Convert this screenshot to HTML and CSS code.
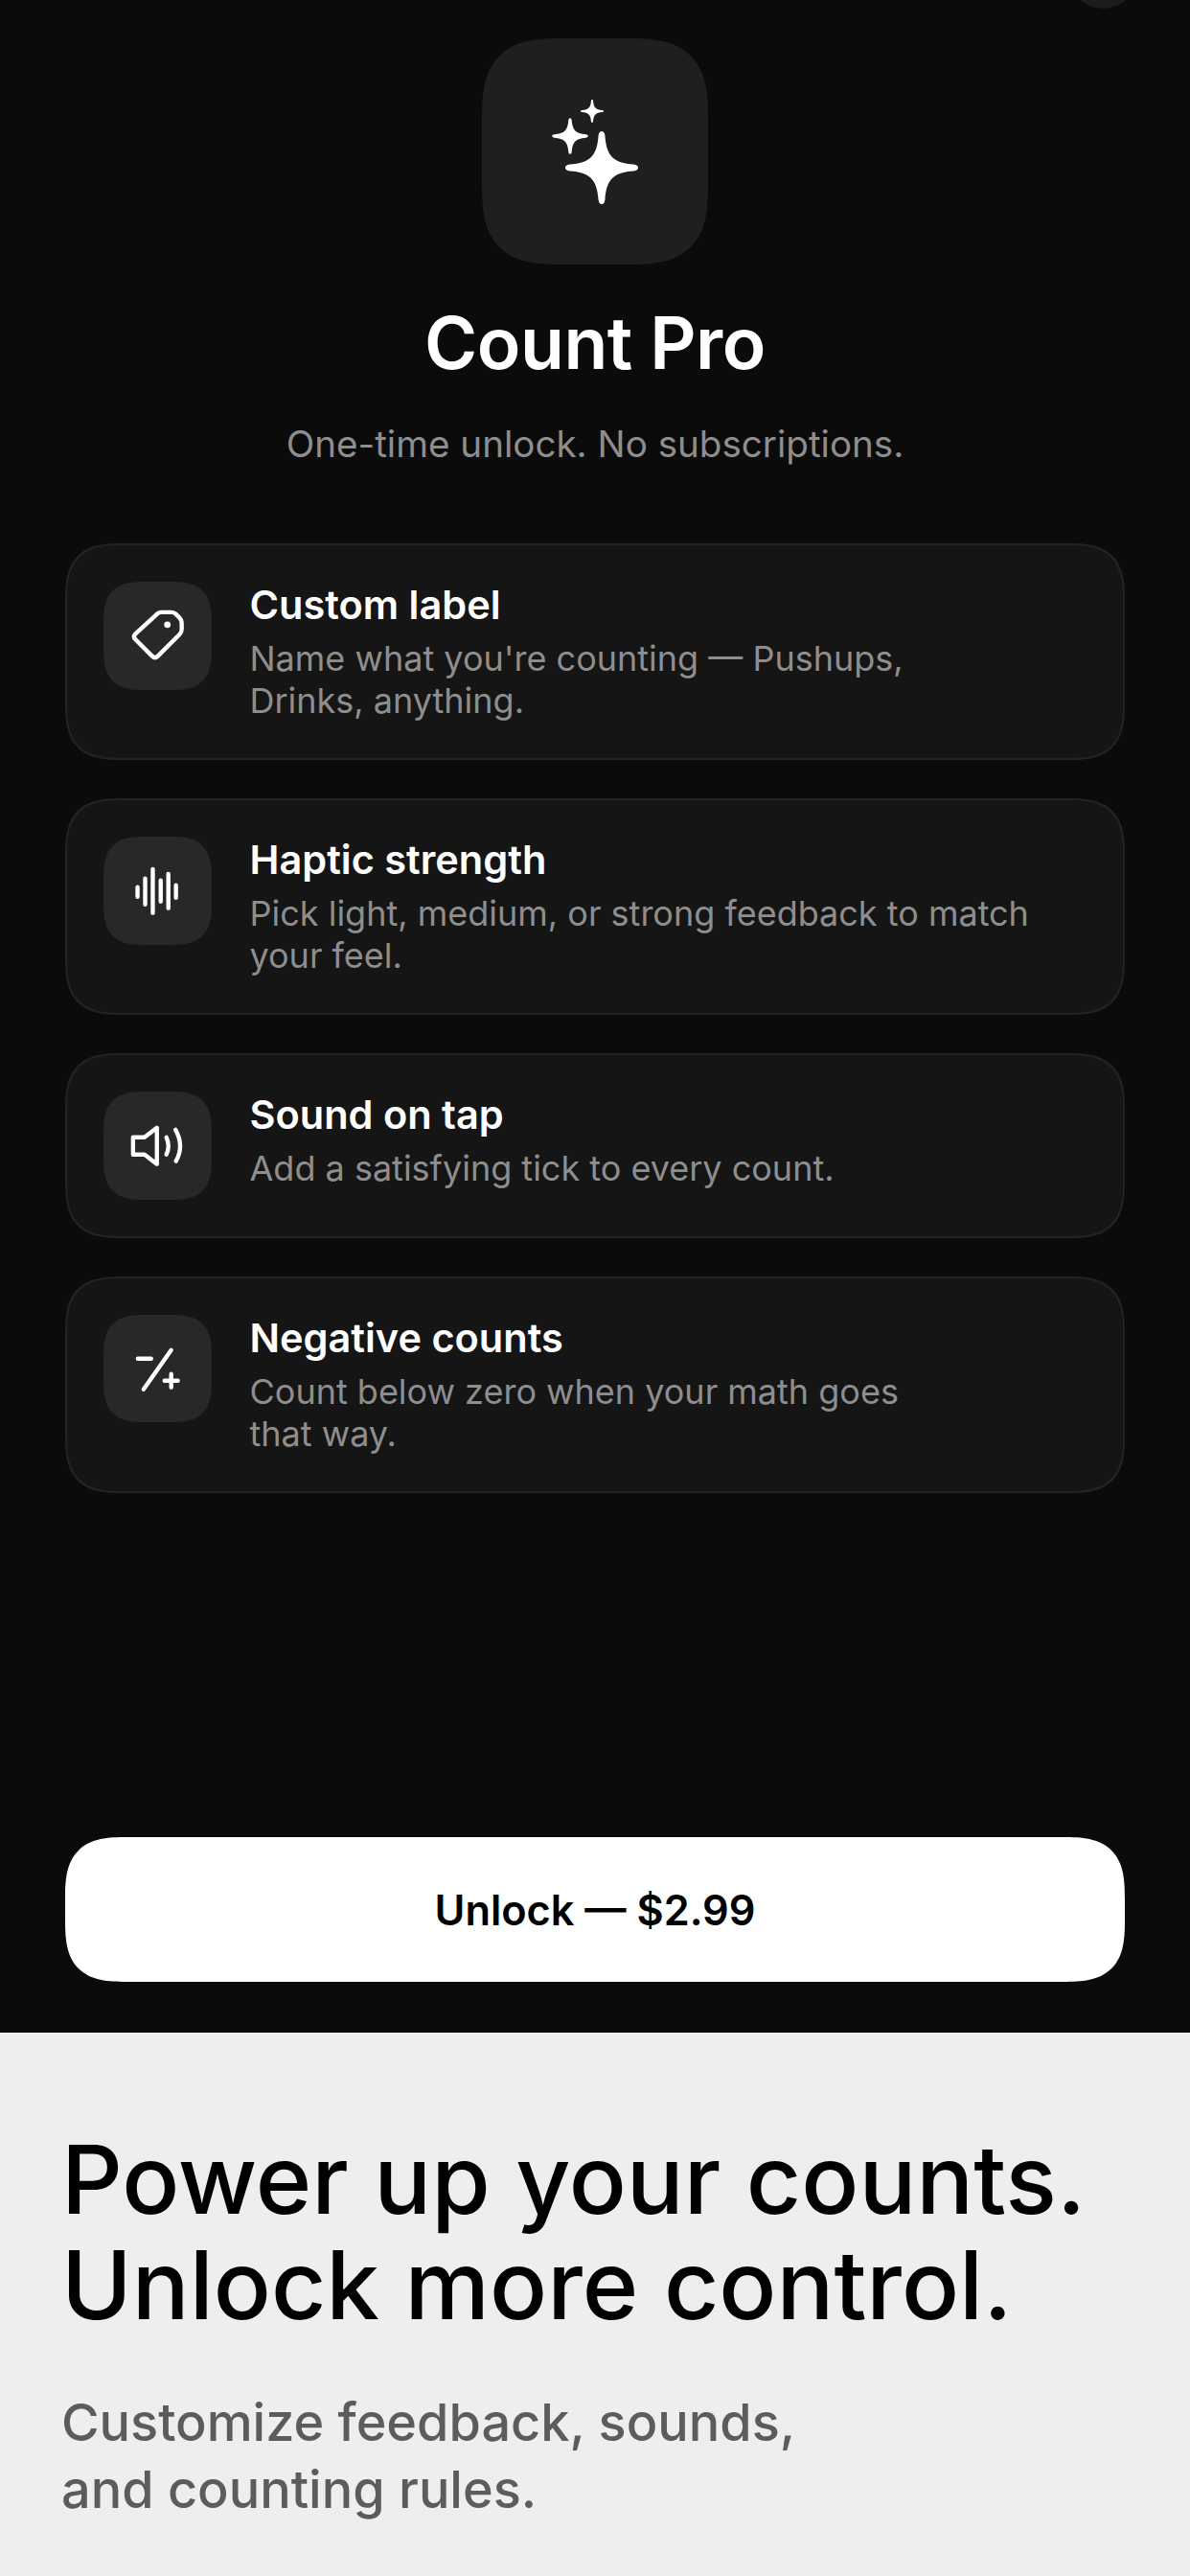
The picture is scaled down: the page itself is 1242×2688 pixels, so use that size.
FILE: index.html
```html
<!DOCTYPE html>
<html lang="en">
<head>
<meta charset="utf-8">
<title>Count Pro</title>
<link rel="stylesheet" href="styles.css">
</head>
<body>
<main class="paywall">
  <span class="close-dot"></span>
  <div class="hero-tile">
    <svg class="hero-icon" viewBox="0 0 236 236">
      <defs>
        <path id="star" d="M0-100C5-100 8-96 9-88C13-32 32-13 88-9C96-8 100-5 100 0C100 5 96 8 88 9C32 13 13 32 9 88C8 96 5 100 0 100C-5 100-8 96-9 88C-13 32-32 13-88 9C-96 8-100 5-100 0C-100-5-96-8-88-9C-32-13-13-32-9-88C-8-96-5-100 0-100Z"/>
      </defs>
      <use href="#star" transform="translate(125 135) scale(.38)"/>
      <use href="#star" transform="translate(92 102) scale(.187)"/>
      <use href="#star" transform="translate(115 76) scale(.12)"/>
    </svg>
  </div>
  <h1 class="title">Count Pro</h1>
  <p class="subtitle">One-time unlock. No subscriptions.</p>
  <section class="features">
    <article class="card">
      <div class="tile">
        <svg class="glyph" viewBox="0 0 113 113">
          <path d="M60.5 32H71Q74 32 76 34L79.5 37.5Q82 40 82 43V50Q82 53 80 55L57 78Q54 81 51 78L33.5 60.5Q30.5 57.5 33.5 54.5L55 35Q57.5 32 60.5 32Z"/>
          <circle class="solid" cx="67" cy="45" r="3.4"/>
        </svg>
      </div>
      <div class="copy">
        <h2 class="card-title">Custom label</h2>
        <p class="card-text">Name what you're counting — Pushups,<br>Drinks, anything.</p>
      </div>
    </article>
    <article class="card">
      <div class="tile">
        <svg class="glyph" viewBox="0 0 113 113">
          <path d="M35.7 53V63M43.7 44V71M51.7 34V80M60 46V68M68 39V75M76 51V64"/>
        </svg>
      </div>
      <div class="copy">
        <h2 class="card-title">Haptic strength</h2>
        <p class="card-text">Pick light, medium, or strong feedback to match<br>your feel.</p>
      </div>
    </article>
    <article class="card">
      <div class="tile">
        <svg class="glyph" viewBox="0 0 113 113">
          <path d="M31 48H43L56 38V76L43 66H31Z"/>
          <path d="M66 48Q70 57 66 66M75.5 40Q85 57 76 73"/>
        </svg>
      </div>
      <div class="copy">
        <h2 class="card-title">Sound on tap</h2>
        <p class="card-text">Add a satisfying tick to every count.</p>
      </div>
    </article>
    <article class="card">
      <div class="tile">
        <svg class="glyph" viewBox="0 0 113 113">
          <path d="M36 46H50M71 37L42 78M71 62V76M64 69H78"/>
        </svg>
      </div>
      <div class="copy">
        <h2 class="card-title">Negative counts</h2>
        <p class="card-text">Count below zero when your math goes<br>that way.</p>
      </div>
    </article>
  </section>
  <button class="unlock">Unlock — $2.99</button>
</main>
<footer class="promo">
  <h2 class="promo-title">Power up your counts.<br>Unlock more control.</h2>
  <p class="promo-text">Customize feedback, sounds,<br>and counting rules.</p>
</footer>
</body>
</html>
```
FILE: styles.css
```css
* { box-sizing: border-box; }
html, body { margin: 0; padding: 0; }
body {
  width: 1242px;
  height: 2688px;
  display: flex;
  flex-direction: column;
  overflow: hidden;
  background: #eeeeee;
  font-family: Inter, "Liberation Sans", sans-serif;
}
.paywall {
  position: relative;
  height: 2121px;
  padding: 40px 68px 53px;
  display: flex;
  flex-direction: column;
  align-items: center;
  background: #0b0b0b;
  color: #fff;
}
.close-dot {
  position: absolute;
  top: -62px;
  left: 1116px;
  width: 71px;
  height: 71px;
  border-radius: 50%;
  background: #1c1c1c;
}
.hero-tile {
  width: 236px;
  height: 236px;
  border-radius: 84px;
  corner-shape: superellipse(1.5);
  background: #1f1f1f;
  flex: none;
}
.hero-icon { display: block; width: 236px; height: 236px; fill: #fff; }
.title {
  margin: 38px 0 0;
  font-size: 75px;
  line-height: 88px;
  font-weight: 600;
  letter-spacing: -0.5px;
}
.subtitle {
  margin: 37px 0 0;
  font-size: 38.6px;
  line-height: 48px;
  color: #8e8e8e;
}
.features {
  width: 100%;
  margin-top: 80px;
  display: flex;
  flex-direction: column;
  gap: 40px;
}
.card {
  display: flex;
  gap: 40px;
  padding: 38px;
  background: #151515;
  border: 2px solid #232323;
  border-radius: 60px;
  corner-shape: superellipse(1.5);
}
.tile {
  width: 112.5px;
  height: 112.5px;
  flex: none;
  border-radius: 44px;
  corner-shape: superellipse(1.5);
  background: #282828;
}
.glyph {
  display: block;
  width: 100%;
  height: 100%;
  fill: none;
  stroke: #fff;
  stroke-width: 4.4;
  stroke-linecap: round;
  stroke-linejoin: round;
}
.solid { fill: #fff; stroke: none; }
.copy { min-width: 0; }
.card-title {
  margin: 0 0 10px;
  font-size: 41.5px;
  line-height: 48px;
  font-weight: 600;
}
.card-text {
  margin: 0;
  font-size: 36px;
  line-height: 44px;
  color: #8e8e8e;
}
.unlock {
  margin-top: auto;
  width: 100%;
  height: 151px;
  border: 0;
  border-radius: 64px;
  corner-shape: superellipse(1.5);
  background: #fff;
  color: #000;
  font-family: inherit;
  font-size: 43.3px;
  font-weight: 600;
}
.promo {
  flex: 1;
  padding: 98px 64px 0;
  background: #eeeeee;
}
.promo-title {
  margin: 0;
  font-size: 99.6px;
  line-height: 110px;
  font-weight: 500;
  color: #000;
}
.promo-text {
  margin: 54px 0 0;
  font-size: 54px;
  line-height: 70px;
  font-weight: 500;
  color: #5c5c5c;
}
```
